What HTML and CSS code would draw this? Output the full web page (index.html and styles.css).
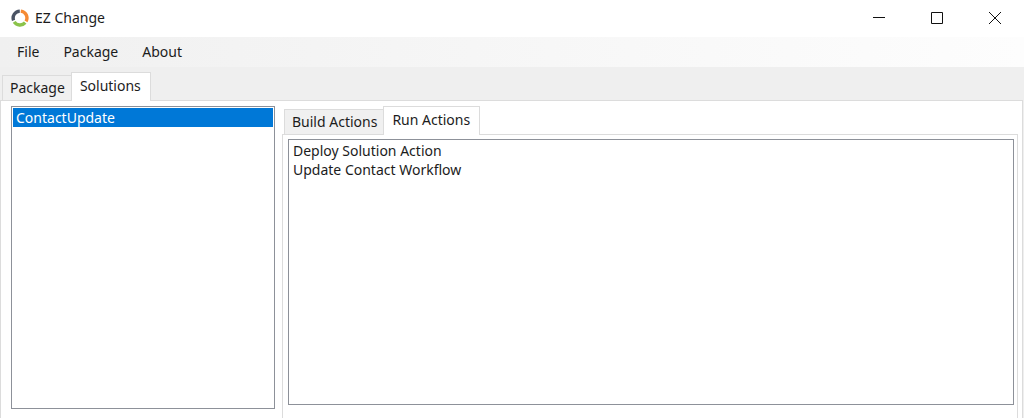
FILE: index.html
```html
<!DOCTYPE html>
<html lang="en">
<head>
<meta charset="utf-8">
<title>EZ Change</title>
<link rel="stylesheet" href="styles.css">
</head>
<body>
<div class="window">
  <header class="titlebar">
    <svg class="logo" viewBox="0 0 18 18" fill="none" stroke-width="3.4" aria-hidden="true">
      <path stroke="#4a5363" d="M2.6 11.4A6.9 6.9 0 0 1 8.8 2.1"/>
      <path stroke="#f58a33" d="M9.8 2.1A6.9 6.9 0 0 1 15 12.4"/>
      <path stroke="#8bc34a" d="M14.2 13.6A6.9 6.9 0 0 1 3.2 12.8"/>
    </svg>
    <h1 class="title">EZ Change</h1>
    <div class="window-buttons">
      <button type="button" class="window-button" aria-label="Minimize"><svg class="glyph" viewBox="0 0 12 12"><path d="M0 5.5h12"/></svg></button>
      <button type="button" class="window-button" aria-label="Maximize"><svg class="glyph" viewBox="0 0 12 12"><path d="M.5.5h11v11H.5z"/></svg></button>
      <button type="button" class="window-button" aria-label="Close"><svg class="glyph" viewBox="0 0 12 12"><path d="M0 0l12 12M12 0L0 12"/></svg></button>
    </div>
  </header>
  <nav class="menubar" aria-label="Main menu">
    <button type="button" class="menu-item">File</button>
    <button type="button" class="menu-item">Package</button>
    <button type="button" class="menu-item">About</button>
  </nav>
  <main class="tab-control">
    <div class="tabs main-tabs" role="tablist">
      <button type="button" class="tab" role="tab" aria-selected="false">Package</button>
      <button type="button" class="tab selected" role="tab" aria-selected="true">Solutions</button>
    </div>
    <section class="panel main-panel" role="tabpanel" aria-label="Solutions">
      <select class="listbox solution-list" size="10" aria-label="Solutions">
        <option selected>ContactUpdate</option>
      </select>
      <div class="tab-control actions">
        <div class="tabs" role="tablist">
          <button type="button" class="tab" role="tab" aria-selected="false">Build Actions</button>
          <button type="button" class="tab selected" role="tab" aria-selected="true">Run Actions</button>
        </div>
        <section class="panel actions-panel" role="tabpanel" aria-label="Run Actions">
          <select class="listbox" size="10" aria-label="Run actions">
            <option>Deploy Solution Action</option>
            <option>Update Contact Workflow</option>
          </select>
        </section>
      </div>
    </section>
  </main>
</div>
</body>
</html>
```
FILE: styles.css
```css
* {
  box-sizing: border-box;
}

body {
  margin: 0;
  background: #fff;
  color: #1c1c1c;
  font: 14px/18px "Segoe UI", "Noto Sans", sans-serif;
}

button {
  margin: 0;
  border: 0;
  background: none;
  color: inherit;
  font: inherit;
  white-space: nowrap;
}

.window {
  display: flex;
  flex-direction: column;
  height: 100vh;
  background: #efefef;
}

.titlebar {
  display: flex;
  align-items: center;
  height: 37px;
  padding: 0 0 2px 11px;
  background: #fff;
}

.logo {
  width: 18px;
  height: 18px;
}

.title {
  flex: 1;
  margin: 0 0 0 6px;
  font-size: 14px;
  font-weight: 400;
}

.window-buttons {
  display: flex;
}

.window-button {
  display: flex;
  align-items: center;
  justify-content: center;
  width: 58px;
  height: 34px;
  padding: 0;
}

.glyph {
  width: 12px;
  height: 12px;
  fill: none;
  stroke: #111;
}

.menubar {
  display: flex;
  align-items: center;
  height: 30px;
  padding-left: 5px;
  background: linear-gradient(to right, #f0f0f0, #fdfdfd);
}

.menu-item {
  padding: 0 12px;
}

.tab-control {
  display: flex;
  flex: 1;
  flex-direction: column;
  min-width: 0;
  min-height: 0;
}

.tabs {
  display: flex;
  align-items: flex-end;
  padding-left: 2px;
}

.main-tabs {
  padding-top: 5px;
}

.tab {
  height: 25px;
  padding: 0 6px 0 7px;
  border: 1px solid #dcdcdc;
  border-width: 1px 0 0 1px;
  background: #f0f0f0;
}

.tab.selected {
  z-index: 1;
  height: 29px;
  margin-bottom: -1px;
  padding: 0 9px 2px 8px;
  border-width: 1px 1px 0;
  background: #fff;
}

.panel {
  display: flex;
  flex: 1;
  min-height: 0;
  border: 1px solid #dcdcdc;
  border-bottom: 0;
  background: #fff;
}

.main-panel {
  gap: 7px;
  margin-right: 1px;
  padding: 5px 4px 0 10px;
}

.listbox {
  flex: 1;
  min-width: 0;
  margin: 0;
  padding: 1px;
  border: 1px solid #8d9199;
  border-radius: 0;
  outline: 0;
  background: #fff;
  color: inherit;
  font: inherit;
  overflow: hidden;
}

.listbox option {
  min-height: 19px;
  padding: 0 3px;
  line-height: 19px;
}

.listbox option:checked {
  background: linear-gradient(#0078d7, #0078d7);
  -webkit-text-fill-color: #fff;
}

.solution-list {
  flex: 0 1 264px;
  margin-bottom: 9px;
}

.actions-panel {
  padding: 4px 3px 13px 5px;
}
```
